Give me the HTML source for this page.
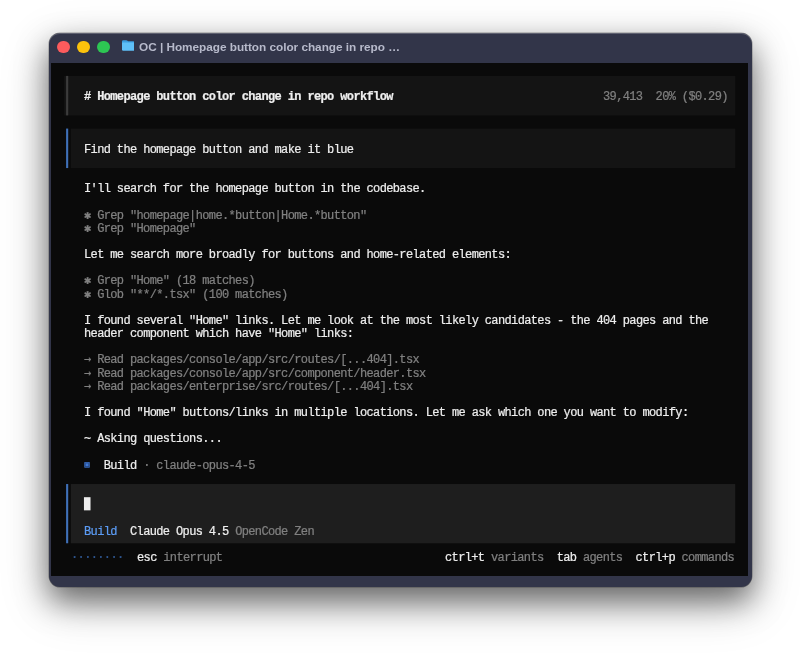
<!DOCTYPE html>
<html lang="en">
<head>
<meta charset="utf-8">
<title>OC | Homepage button color change in repo workflow</title>
<style>
  html, body { margin: 0; padding: 0; }
  body {
    width: 800px; height: 653px; overflow: hidden; position: relative;
    background: #ffffff;
    font-family: "Liberation Mono", "DejaVu Sans Mono", monospace;
  }
  .win {
    position: absolute; left: 49px; top: 33px; width: 703px; height: 554px;
    background: #323549; border-radius: 11px;
    box-shadow:
      0 0 0 0.5px rgba(0,0,0,0.35),
      0 14px 30px rgba(0,0,0,0.5),
      0 16px 50px rgba(0,0,0,0.22);
    overflow: hidden;
  }
  .win::before {
    content: ""; position: absolute; inset: 0; border-radius: 11px;
    box-shadow: inset 0 1px 0 rgba(255,255,255,0.22); pointer-events: none; z-index: 5;
  }
  .dot { position: absolute; top: 7.6px; width: 12.8px; height: 12.8px; border-radius: 50%; }
  .dot.r { left: 7.85px;  background: #fc5b5d; }
  .dot.y { left: 28.1px; background: #fcc20c; }
  .dot.g { left: 48.1px; background: #2dc653; }
  .folder { position: absolute; left: 72.8px; top: 7.3px; width: 12.6px; height: 11px; }
  .title {
    position: absolute; left: 89.8px; top: 5.9px; height: 17px; line-height: 17px;
    font-family: "Liberation Sans", "DejaVu Sans", sans-serif; font-weight: bold; font-size: 11.8px;
    color: #b7bacb; white-space: pre; letter-spacing: -0.03px; will-change: transform;
  }
  /* terminal grid: --w col width, --h row height */
  .term {
    --w: 6.57px; --h: 13.165px;
    position: absolute; left: 2px; top: 30px; width: 697px; height: 513px;
    background: #0a0a0a; color: #eeeeee;
    font-size: 12px; letter-spacing: -0.631px;
  }
  .bg { position: absolute; left: 0; top: 0; display: block; }
  .ln {
    position: absolute; left: calc(var(--w) * var(--c) + 0.1px); top: calc(var(--h) * var(--r) + 1.85px);
    height: var(--h); line-height: var(--h); white-space: pre; margin: 0;
    will-change: transform; -webkit-text-stroke: 0.22px currentColor;
  }
  .s { display: inline-block; width: var(--w); line-height: 0; font-style: normal; text-align: center; letter-spacing: 0; font-family: "DejaVu Sans Mono", monospace; }
  .ic { font-size: 8.5px; color: #3f78d6; position: relative; top: -1.9px; left: -0.3px; }
  .dim { color: #808080; }
  .b { font-weight: bold; }
  .blue { color: #5c9cf5; }
</style>
</head>
<body>
<div class="win">
  <div class="dot r"></div><div class="dot y"></div><div class="dot g"></div>
  <svg class="folder" viewBox="0 0 126 110" aria-hidden="true">
    <path d="M0 14 Q0 2 12 2 L42 2 Q50 2 55 8 L60 13 L114 13 Q126 13 126 25 L126 30 L0 30 Z" fill="#3c9fe0"/>
    <path d="M0 26 L126 26 L126 96 Q126 108 114 108 L12 108 Q0 108 0 96 Z" fill="#5fc0f7"/>
  </svg>
  <div class="title">OC | Homepage button color change in repo …</div>

  <div class="term">
    <svg class="bg" width="697" height="513" viewBox="0 0 697 513" aria-hidden="true">
      <rect x="13.24" y="12.91" width="670.96" height="39.49" fill="#141414"/>
      <rect x="15.10" y="12.91" width="2.1" height="39.49" fill="#3c3c3c"/>
      <rect x="19.81" y="65.57" width="664.39" height="39.49" fill="#141414"/>
      <rect x="15.10" y="65.57" width="2.1" height="39.49" fill="#3f70b8"/>
      <rect x="19.81" y="421.03" width="664.39" height="59.24" fill="#1e1e1e"/>
      <rect x="15.10" y="421.03" width="2.1" height="59.24" fill="#3f70b8"/>
      <rect x="32.95" y="434.19" width="6.57" height="13.16" fill="#eeeeee"/>
    </svg>
    <!-- header box: rows 1-3 -->
    <div class="ln b" style="--c:5;--r:2"># Homepage button color change in repo workflow</div>
    <div class="ln dim" style="--c:84;--r:2">39,413  20% ($0.29)</div>

    <!-- user message box: rows 5-7 -->
    <div class="ln" style="--c:5;--r:6">Find the homepage button and make it blue</div>

    <div class="ln" style="--c:5;--r:9">I'll search for the homepage button in the codebase.</div>

    <div class="ln dim" style="--c:5;--r:11"><i class="s">✱</i> Grep "homepage|home.*button|Home.*button"</div>
    <div class="ln dim" style="--c:5;--r:12"><i class="s">✱</i> Grep "Homepage"</div>

    <div class="ln" style="--c:5;--r:14">Let me search more broadly for buttons and home-related elements:</div>

    <div class="ln dim" style="--c:5;--r:16"><i class="s">✱</i> Grep "Home" (18 matches)</div>
    <div class="ln dim" style="--c:5;--r:17"><i class="s">✱</i> Glob "**/*.tsx" (100 matches)</div>

    <div class="ln" style="--c:5;--r:19">I found several "Home" links. Let me look at the most likely candidates - the 404 pages and the</div>
    <div class="ln" style="--c:5;--r:20">header component which have "Home" links:</div>

    <div class="ln dim" style="--c:5;--r:22"><i class="s">→</i> Read packages/console/app/src/routes/[...404].tsx</div>
    <div class="ln dim" style="--c:5;--r:23"><i class="s">→</i> Read packages/console/app/src/component/header.tsx</div>
    <div class="ln dim" style="--c:5;--r:24"><i class="s">→</i> Read packages/enterprise/src/routes/[...404].tsx</div>

    <div class="ln" style="--c:5;--r:26">I found "Home" buttons/links in multiple locations. Let me ask which one you want to modify:</div>

    <div class="ln" style="--c:5;--r:28">~ Asking questions...</div>

    <div class="ln" style="--c:5;--r:30"><i class="s ic">▣</i>  Build <span class="dim">· claude-opus-4-5</span></div>

    <!-- prompt box: rows 32-36.5 -->
    <div class="ln" style="--c:5;--r:35"><span class="blue">Build</span>  Claude Opus 4.5 <span class="dim">OpenCode Zen</span></div>

    <!-- footer row 37 -->
    <div class="ln" style="--c:3;--r:37;color:#2f5892">········</div>
    <div class="ln" style="--c:13;--r:37">esc <span class="dim">interrupt</span></div>
    <div class="ln" style="--c:60;--r:37">ctrl+t <span class="dim">variants</span>  tab <span class="dim">agents</span>  ctrl+p <span class="dim">commands</span></div>
  </div>
</div>
</body>
</html>
